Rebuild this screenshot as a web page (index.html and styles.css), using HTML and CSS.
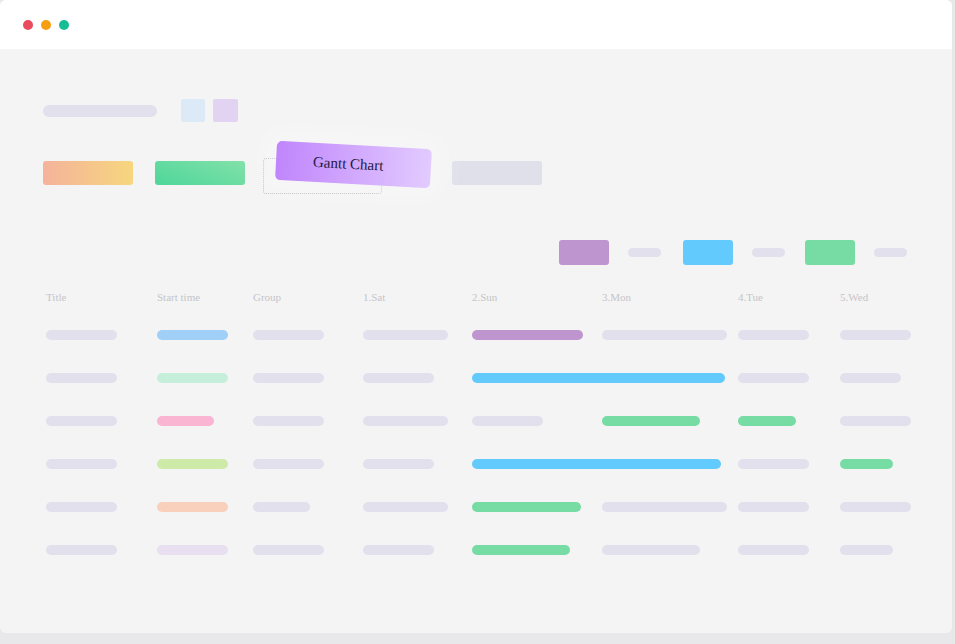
FILE: index.html
```html
<!DOCTYPE html>
<html lang="en">
<head>
<meta charset="utf-8">
<title>Gantt Chart</title>
<link rel="stylesheet" href="styles.css">
</head>
<body>
<div class="window">
  <div class="titlebar">
    <span class="dot red"></span>
    <span class="dot orange"></span>
    <span class="dot green"></span>
  </div>
  <div class="main">
    <div class="toolbar">
      <span class="tool-pill"></span>
      <span class="tool-sq blue"></span>
      <span class="tool-sq purple"></span>
    </div>
    <div class="views">
      <span class="view-btn warm"></span>
      <span class="view-btn mint"></span>
      <span class="slot">
        <span class="drag-card">Gantt Chart</span>
      </span>
      <span class="view-btn plain"></span>
    </div>
    <div class="legend">
      <span class="legend-sw c-purple"></span><span class="legend-pill"></span>
      <span class="legend-sw c-blue"></span><span class="legend-pill mid"></span>
      <span class="legend-sw c-green"></span><span class="legend-pill last"></span>
    </div>
    <div class="table">
      <div class="row head">
        <span>Title</span><span>Start time</span><span>Group</span><span>1.Sat</span><span>2.Sun</span><span>3.Mon</span><span>4.Tue</span><span>5.Wed</span>
      </div>
      <div class="row">
        <span class="bar g w71"></span><span class="bar sky w71"></span><span class="bar g w71"></span><span class="bar g w85"></span><span class="bar c-purple" style="width:111px"></span><span class="bar g" style="width:125px"></span><span class="bar g w71"></span><span class="bar g w71"></span>
      </div>
      <div class="row">
        <span class="bar g w71"></span><span class="bar mintl w71"></span><span class="bar g w71"></span><span class="bar g w71"></span><span class="bar c-blue span2" style="width:253px"></span><span class="bar g w71"></span><span class="bar g" style="width:61px"></span>
      </div>
      <div class="row">
        <span class="bar g w71"></span><span class="bar pink" style="width:57px"></span><span class="bar g w71"></span><span class="bar g w85"></span><span class="bar g w71"></span><span class="bar c-green" style="width:98px"></span><span class="bar c-green" style="width:58px"></span><span class="bar g w71"></span>
      </div>
      <div class="row">
        <span class="bar g w71"></span><span class="bar lime w71"></span><span class="bar g w71"></span><span class="bar g w71"></span><span class="bar c-blue span2" style="width:249px"></span><span class="bar g w71"></span><span class="bar c-green" style="width:53px"></span>
      </div>
      <div class="row">
        <span class="bar g w71"></span><span class="bar peach w71"></span><span class="bar g" style="width:57px"></span><span class="bar g w85"></span><span class="bar c-green" style="width:109px"></span><span class="bar g" style="width:125px"></span><span class="bar g w71"></span><span class="bar g w71"></span>
      </div>
      <div class="row">
        <span class="bar g w71"></span><span class="bar lav w71"></span><span class="bar g w71"></span><span class="bar g w71"></span><span class="bar c-green" style="width:98px"></span><span class="bar g" style="width:98px"></span><span class="bar g w71"></span><span class="bar g" style="width:53px"></span>
      </div>
    </div>
  </div>
</div>
</body>
</html>
```
FILE: styles.css
```css
* { box-sizing: border-box; }
html, body { margin: 0; padding: 0; }
body {
  background: #e8e8eb;
  width: 955px;
  height: 644px;
  overflow: hidden;
  font-family: "Liberation Serif", "Times New Roman", serif;
}
.window {
  width: 952px;
  height: 633px;
  border-radius: 6px;
  overflow: hidden;
  background: #f4f4f4;
  display: flex;
  flex-direction: column;
}
.titlebar {
  height: 49px;
  background: #ffffff;
  display: flex;
  align-items: center;
  gap: 8px;
  padding: 1px 0 0 23px;
  flex-shrink: 0;
}
.dot { width: 10px; height: 10px; border-radius: 50%; }
.dot.red { background: #ea4a5e; }
.dot.orange { background: #f59e12; }
.dot.green { background: #17bd95; }

.main {
  padding: 50px 45px 0 43px;
  flex: 1;
}
.toolbar {
  height: 23px;
  display: flex;
  align-items: center;
}
.tool-pill {
  width: 114px; height: 12px; border-radius: 6px; background: #e1e0ec;
  margin-right: 24px;
}
.tool-sq { width: 24px; height: 23px; border-radius: 2px; }
.tool-sq.blue { background: #dbeaf6; margin-right: 8px; }
.tool-sq.purple { background: #e2d3f3; width: 25px; }

.views {
  margin-top: 39px;
  height: 24px;
  display: flex;
  align-items: flex-start;
}
.view-btn { width: 90px; height: 24px; border-radius: 3px; }
.view-btn.warm { background: linear-gradient(90deg, #f4b39b, #f7d67e); margin-right: 22px; }
.view-btn.mint { background: linear-gradient(20deg, #4ed69a, #82e1a9); margin-right: 18px; }
.view-btn.plain { background: #e0e0ea; }
.slot {
  position: relative;
  width: 119px;
  height: 36px;
  margin-top: -3px;
  margin-right: 70px;
  border: 1px dotted #bfbfc4;
  border-radius: 3px;
}
.drag-card {
  position: absolute;
  left: 11.5px;
  top: -14.5px;
  width: 155px;
  height: 38.5px;
  border-radius: 5px;
  background: linear-gradient(90deg, #c085fc, #e2cbff);
  transform: rotate(3.1deg);
  display: flex;
  align-items: center;
  padding-left: 37px;
  font-size: 15px;
  color: #1d1a3f;
  box-shadow: 0 0 26px 12px rgba(255, 255, 255, 0.3);
}

.legend {
  margin-top: 55px;
  height: 25px;
  display: flex;
  align-items: center;
  justify-content: flex-end;
}
.legend-sw { width: 50px; height: 24.5px; border-radius: 3px; margin-right: 19px; }
.legend-pill { width: 33px; height: 9.5px; border-radius: 5px; background: #e1e0ec; margin-right: 22px; }
.legend-pill.mid { margin-right: 20px; }
.legend-pill.last { margin-right: 0; }

.table { margin-left: 3px; margin-top: 25px; }
.row {
  display: grid;
  grid-template-columns: 111px 96px 110px 109px 130px 136px 102px 71px;
  align-items: center;
}
.row.head {
  height: 14px;
  line-height: 14px;
  font-size: 11px;
  color: #c5c5c7;
}
.row + .row { margin-top: 33px; }
.row.head + .row { margin-top: 26px; }
.bar { height: 10px; border-radius: 5px; display: block; }
.bar.span2 { grid-column: span 2; }
.w71 { width: 71px; }
.w85 { width: 85px; }
.g { background: #e1e0ec; }
.sky { background: #a0cff8; }
.mintl { background: #c6efdb; }
.pink { background: #fab5d2; }
.lime { background: #cdeaa9; }
.peach { background: #f9d0bc; }
.lav { background: #e8dff0; }
.c-purple { background: #bf95cf; }
.c-blue { background: #62cafd; }
.c-green { background: #77dca3; }
```
